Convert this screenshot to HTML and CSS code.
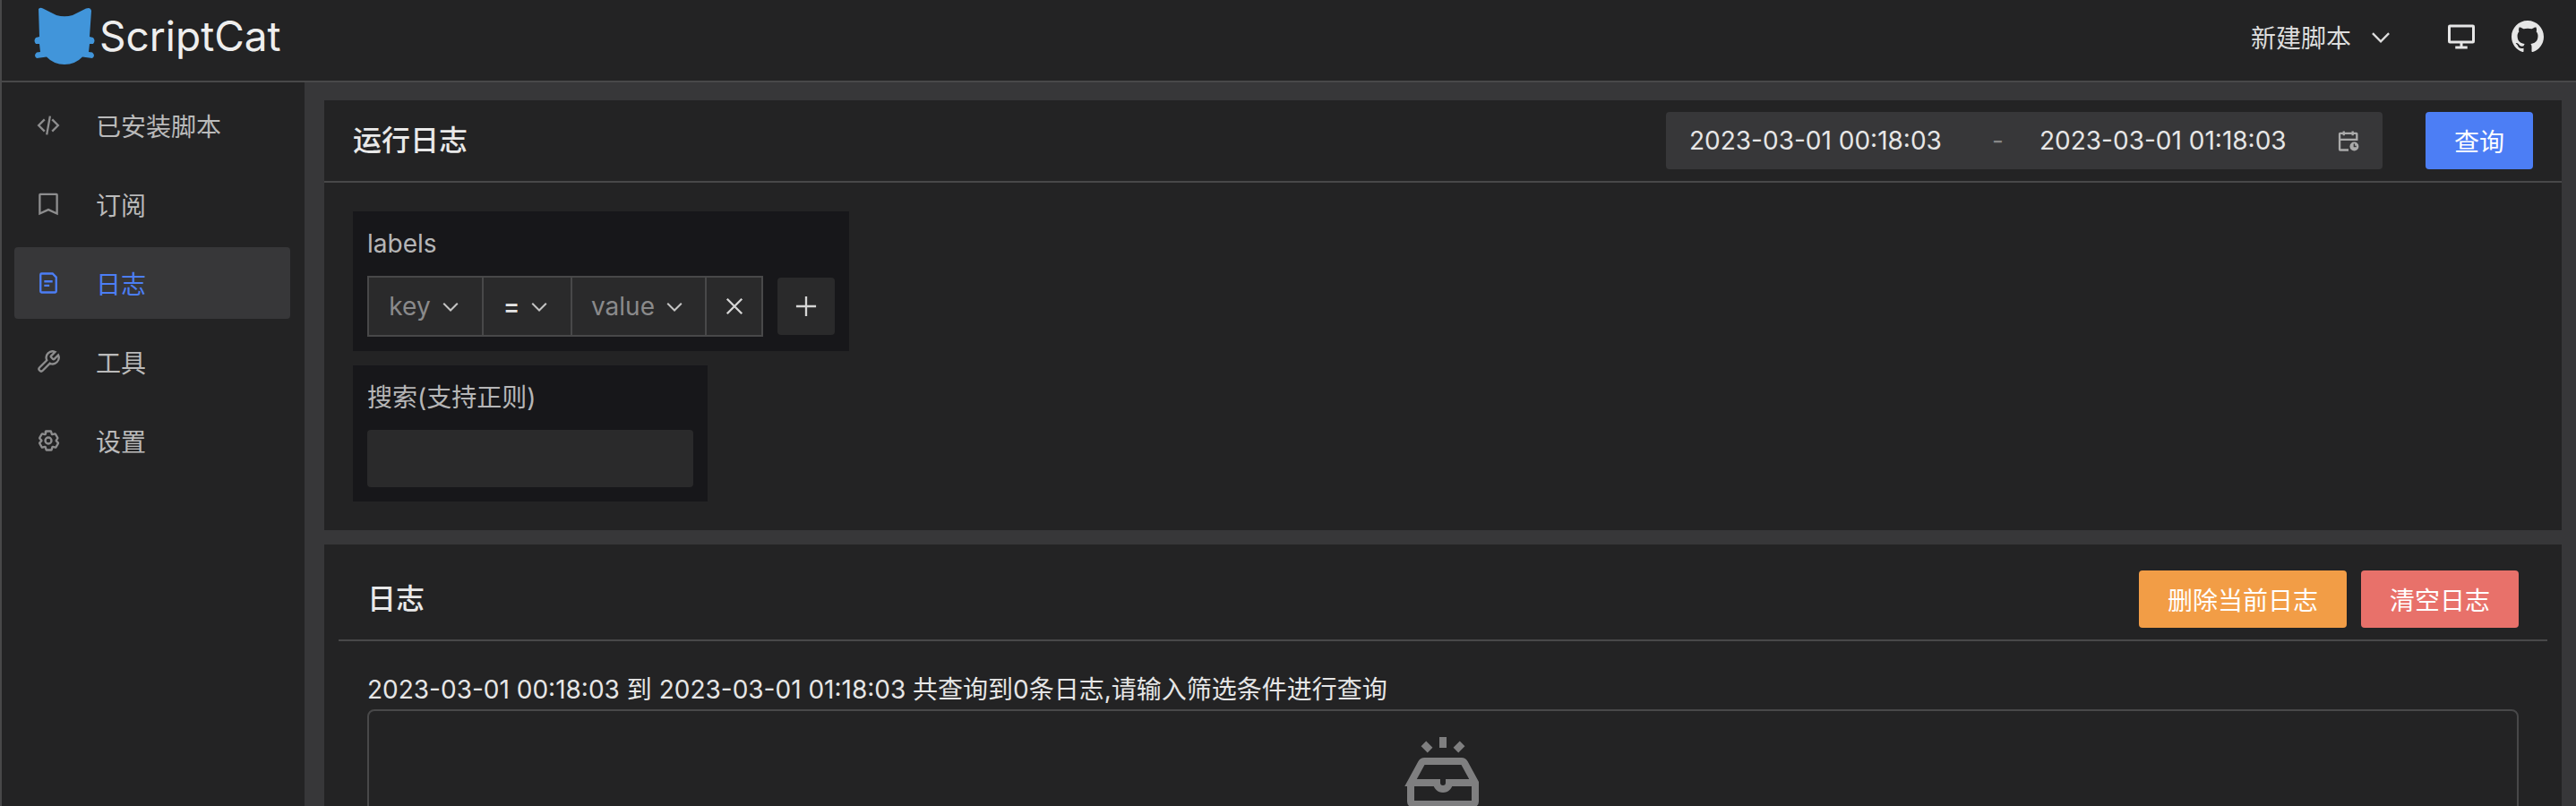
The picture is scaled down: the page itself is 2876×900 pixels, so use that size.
FILE: index.html
```
<!DOCTYPE html>
<html lang="zh-CN">
<head>
<meta charset="utf-8">
<title>ScriptCat</title>
<link rel="stylesheet" href="styles.css">
</head>
<body>
<div class="page">
  <header class="topbar">
    <div class="brand">
      <svg class="logo" viewBox="38 6 70 68"><path fill="#4195da" d="M43 9Q45 7 48 8.500L63 16Q72 18.500 81 16L96 8.500Q101 6.500 102 11L100 40L104 41Q107 44.500 104 48L100 48L99 57L103 57.500Q107 61 103 64L92 62.500Q84 71 72 71Q60 71 52 62.500L41 64Q37 61 41 57.500L45 57L44 48L40 48Q37 44.500 40 41L44 40Z"/></svg>
      <span class="brand-name">ScriptCat</span>
    </div>
    <div class="top-actions">
      <div class="new-script"><span>新建脚本</span><svg class="ico chev-top" viewBox="0 0 48 48"><path d="M39.600 17.443 24.043 33 8.487 17.443"/></svg></div>
      <svg class="ico desktop" viewBox="0 0 48 48"><path d="M24 32v8m0 0h-9m9 0h9M7 32h34a1 1 0 0 0 1-1V9a1 1 0 0 0-1-1H7a1 1 0 0 0-1 1v22a1 1 0 0 0 1 1Z"/></svg>
      <svg class="github" viewBox="0 0 16 16"><path d="M8 0C3.580 0 0 3.580 0 8c0 3.540 2.290 6.530 5.470 7.590.4.070.55-.17.55-.38 0-.19-.01-.82-.01-1.490-2.010.37-2.530-.49-2.690-.94-.09-.23-.48-.94-.82-1.130-.28-.15-.68-.52-.01-.53.63-.01 1.080.58 1.230.82.72 1.210 1.870.87 2.330.66.07-.52.28-.87.51-1.070-1.780-.2-3.640-.89-3.640-3.950 0-.87.31-1.590.82-2.150-.08-.2-.36-1.020.08-2.120 0 0 .67-.21 2.200.82.64-.18 1.320-.27 2-.27s1.360.09 2 .27c1.530-1.040 2.200-.82 2.200-.82.44 1.100.16 1.920.08 2.120.51.56.82 1.270.82 2.150 0 3.070-1.870 3.750-3.650 3.950.29.25.54.73.54 1.480 0 1.070-.01 1.930-.01 2.200 0 .21.15.46.55.38A8.013 8.013 0 0 0 16 8c0-4.420-3.580-8-8-8z"/></svg>
    </div>
  </header>
  <div class="content">
    <nav class="sidebar">
      <a class="nav-item"><svg class="ico nav-ico" viewBox="0 0 48 48"><path d="M16.734 12.686 5.420 24l11.314 11.314m14.521-22.628L42.570 24 31.255 35.314M27.200 6.280l-6.251 35.453"/></svg><span>已安装脚本</span></a>
      <a class="nav-item"><svg class="ico nav-ico" viewBox="0 0 48 48"><path d="M7.500 6a1 1 0 0 1 1-1h31a1 1 0 0 1 1 1v36l-16.500-7.500-16.500 7.500V6Z"/></svg><span>订阅</span></a>
      <a class="nav-item active"><svg class="ico nav-ico" viewBox="0 0 48 48"><path d="M16 21h16m-16 8h10m11 13H11a2 2 0 0 1-2-2V8a2 2 0 0 1 2-2h21l7 7v27a2 2 0 0 1-2 2Z"/></svg><span>日志</span></a>
      <a class="nav-item"><svg class="ico nav-ico wrench" viewBox="0 0 24 24"><path d="M14.700 6.300a1 1 0 0 0 0 1.400l1.600 1.600a1 1 0 0 0 1.400 0l3.770-3.770a6 6 0 0 1-7.940 7.940l-6.910 6.910a2.120 2.120 0 0 1-3-3l6.910-6.910a6 6 0 0 1 7.940-7.940l-3.760 3.760z"/></svg><span>工具</span></a>
      <a class="nav-item"><svg class="ico nav-ico" viewBox="0 0 48 48"><path d="M18.797 6.732A1 1 0 0 1 19.760 6h8.480a1 1 0 0 1 .964.732l1.285 4.628a1 1 0 0 0 1.213.7l4.651-1.200a1 1 0 0 1 1.116.468l4.240 7.344a1 1 0 0 1-.153 1.200L39.193 23.300a1 1 0 0 0 0 1.402l3.364 3.427a1 1 0 0 1 .153 1.200l-4.240 7.344a1 1 0 0 1-1.116.468l-4.650-1.200a1 1 0 0 0-1.214.7l-1.285 4.628a1 1 0 0 1-.964.732h-8.480a1 1 0 0 1-.963-.732L18.510 36.640a1 1 0 0 0-1.213-.7l-4.650 1.200a1 1 0 0 1-1.116-.468l-4.240-7.344a1 1 0 0 1 .153-1.200L10.808 24.700a1 1 0 0 0 0-1.402l-3.364-3.427a1 1 0 0 1-.153-1.200l4.240-7.344a1 1 0 0 1 1.116-.468l4.650 1.200a1 1 0 0 0 1.213-.7l1.286-4.628Z"/><path d="M30 24a6 6 0 1 1-12 0 6 6 0 0 1 12 0Z"/></svg><span>设置</span></a>
    </nav>
    <main class="main">
      <section class="card query-card">
        <div class="card-head">
          <h2 class="card-title">运行日志</h2>
          <div class="head-tools">
            <div class="range">
              <span class="range-start">2023-03-01 00:18:03</span>
              <span class="range-sep">-</span>
              <span class="range-end">2023-03-01 01:18:03</span>
              <svg class="ico range-ico" viewBox="0 0 48 48"><path d="M7 22h33V11a1 1 0 0 0-1-1H8a1 1 0 0 0-1 1v30a1 1 0 0 0 1 1h16M32 6v8M15 6v8"/><circle class="dot" cx="35" cy="35" r="8.500"/><path class="hand" d="M35 30v5h4"/></svg>
            </div>
            <button class="btn primary">查询</button>
          </div>
        </div>
        <div class="filters">
          <div class="filter labels-filter">
            <div class="filter-label">labels</div>
            <div class="label-row">
              <div class="group">
                <div class="cell key"><span class="muted">key</span><svg class="ico chev" viewBox="0 0 48 48"><path d="M39.600 17.443 24.043 33 8.487 17.443"/></svg></div>
                <div class="cell op"><span class="eq">=</span><svg class="ico chev" viewBox="0 0 48 48"><path d="M39.600 17.443 24.043 33 8.487 17.443"/></svg></div>
                <div class="cell val"><span class="muted">value</span><svg class="ico chev" viewBox="0 0 48 48"><path d="M39.600 17.443 24.043 33 8.487 17.443"/></svg></div>
                <div class="cell del"><svg class="ico x" viewBox="0 0 48 48"><path d="M9.857 9.858 24 24m0 0 14.142 14.142M24 24 38.142 9.858M24 24 9.857 38.142"/></svg></div>
              </div>
              <button class="add"><svg class="ico plus" viewBox="0 0 48 48"><path d="M5 24h38M24 5v38"/></svg></button>
            </div>
          </div>
          <div class="filter search-filter">
            <div class="filter-label">搜索(支持正则)</div>
            <div class="search-input"></div>
          </div>
        </div>
      </section>
      <section class="card log-card">
        <div class="log-head">
          <h2 class="card-title">日志</h2>
          <div class="log-actions">
            <button class="btn warn">删除当前日志</button>
            <button class="btn danger">清空日志</button>
          </div>
        </div>
        <div class="log-body">
          <div class="summary">2023-03-01 00:18:03 到 2023-03-01 01:18:03 共查询到0条日志,请输入筛选条件进行查询</div>
          <div class="log-box">
            <svg class="empty" viewBox="0 0 48 48"><path d="M24 5v6M13.200 8.700l3.600 3.600M34.800 8.700l-3.600 3.600M6 30.500V41a1.500 1.500 0 0 0 1.500 1.500h33A1.500 1.500 0 0 0 42 41V30.500L36 19.500a2 2 0 0 0-1.700-1H13.700a2 2 0 0 0-1.700 1L6 30.500h14.500a3.500 3.500 0 0 0 7 0H42"/></svg>
          </div>
        </div>
      </section>
    </main>
  </div>
</div>
</body>
</html>
```
FILE: styles.css
```
* { box-sizing: border-box; }
html, body { margin: 0; height: 900px; overflow: hidden; background: #232324; }
body { font-family: Inter, "Noto Sans CJK SC", sans-serif; font-size: 28px; color: rgba(255,255,255,.9); }
h2 { margin: 0; font-weight: 500; }
button { font: inherit; border: 0; padding: 0; color: inherit; }
.page { height: 900px; display: flex; flex-direction: column; border-left: 2px solid #484849; overflow: hidden; }
.topbar { flex: none; height: 92px; border-bottom: 2px solid #484849; display: flex; align-items: center; justify-content: space-between; background: #232324; }
.brand { display: flex; align-items: center; margin-left: 36px; }
.logo { width: 70px; height: 68px; display: block; margin-top: -8px; }
.brand-name { font-size: 46px; line-height: 60px; color: #eee; margin-left: 3px; margin-top: -10px; }
.top-actions { display: flex; align-items: center; margin: -8px 36px 0 0; }
.new-script { display: flex; align-items: center; font-size: 28px; color: #ddd; }
.ico { fill: none; stroke: currentColor; stroke-width: 4; display: block; }
.chev-top { width: 28px; height: 28px; margin-left: 19px; }
.desktop { width: 36px; height: 36px; margin-left: 58px; color: #e6e6e6; }
.github { width: 36px; height: 36px; margin-left: 38px; fill: #e6e6e6; }
.content { flex: 1; display: flex; min-height: 0; }
.sidebar { width: 338px; flex: none; padding: 8px 14px 8px 14px; display: flex; flex-direction: column; gap: 8px; background: #232324; }
.nav-item { height: 80px; width: 308px; display: flex; align-items: center; padding-left: 24px; border-radius: 4px; color: rgba(255,255,255,.7); }
.nav-ico { width: 28px; height: 28px; margin-right: 39px; color: #8d8d8e; }
.wrench { stroke-width: 2; }
.active { background: #373739; color: #4c7ef5; }
.active .nav-ico { color: #4c7ef5; }
.main { flex: 1; min-width: 0; background: #373739; padding: 20px 16px 0 22px; display: flex; flex-direction: column; gap: 16px; }
.card { background: #232324; flex: none; }
.query-card { height: 480px; }
.card-head { height: 92px; border-bottom: 2px solid #484849; padding: 0 32px; display: flex; align-items: center; justify-content: space-between; }
.card-title { font-size: 32px; line-height: 44px; color: #e9e9e9; }
.head-tools { display: flex; gap: 48px; }
.range { width: 800px; height: 64px; background: #373739; border-radius: 4px; display: flex; align-items: center; padding-left: 26px; color: #e6e6e6; }
.range-start { width: 338px; }
.range-sep { width: 53px; color: #888; }
.range-end { width: 331px; }
.range-ico { width: 28px; height: 28px; color: #aaa; stroke-width: 4; }
.dot { fill: #aaa; stroke: none; }
.hand { stroke: #373739; stroke-width: 2.500; }
.btn { height: 64px; border-radius: 4px; color: #fff; display: block; }
.primary { width: 120px; background: #4c7ef5; }
.filters { padding: 32px 32px 0; display: flex; flex-direction: column; align-items: flex-start; gap: 16px; }
.filter { background: #17171a; padding: 16px; }
.labels-filter { width: 554px; height: 156px; }
.search-filter { width: 396px; height: 152px; }
.filter-label { line-height: 40px; color: rgba(255,255,255,.7); }
.label-row { display: flex; align-items: center; margin-top: 16px; gap: 16px; }
.group { display: flex; height: 68px; width: 442px; border: 2px solid #484849; }
.cell { background: #2a2a2b; display: flex; align-items: center; justify-content: center; border-right: 2px solid #484849; }
.cell.key { width: 128px; }
.cell.op { width: 99px; }
.cell.val { width: 150px; }
.cell.del { flex: 1; border-right: 0; }
.muted { color: #8a8a8b; }
.eq { color: #e6e6e6; font-weight: 500; }
.chev { width: 24px; height: 24px; margin: 0 1px 0 10px; color: #c4c4c4; }
.x { width: 28px; height: 28px; color: #d5d5d5; }
.add { width: 64px; height: 64px; border-radius: 4px; background: #2a2a2b; display: flex; align-items: center; justify-content: center; }
.plus { width: 28px; height: 28px; color: #d5d5d5; }
.search-input { margin-top: 16px; height: 64px; background: #2a2a2b; border-radius: 4px; }
.log-head { height: 108px; margin: 0 16px; border-bottom: 2px solid #484849; padding: 29px 32px 0; display: flex; justify-content: space-between; align-items: flex-start; }
.log-head .card-title { margin-top: 10px; }
.log-actions { display: flex; gap: 16px; }
.warn { width: 232px; background: #f29d46; }
.danger { width: 176px; background: #e8716a; }
.log-body { padding: 32px 48px 0; }
.summary { line-height: 44px; color: #e6e6e6; }
.log-box { height: 400px; border: 2px solid #484849; border-radius: 8px; display: flex; justify-content: center; align-items: flex-start; padding-top: 19px; }
.empty { width: 96px; height: 96px; fill: none; stroke: #7f7f80; stroke-width: 4; display: block; }
```
